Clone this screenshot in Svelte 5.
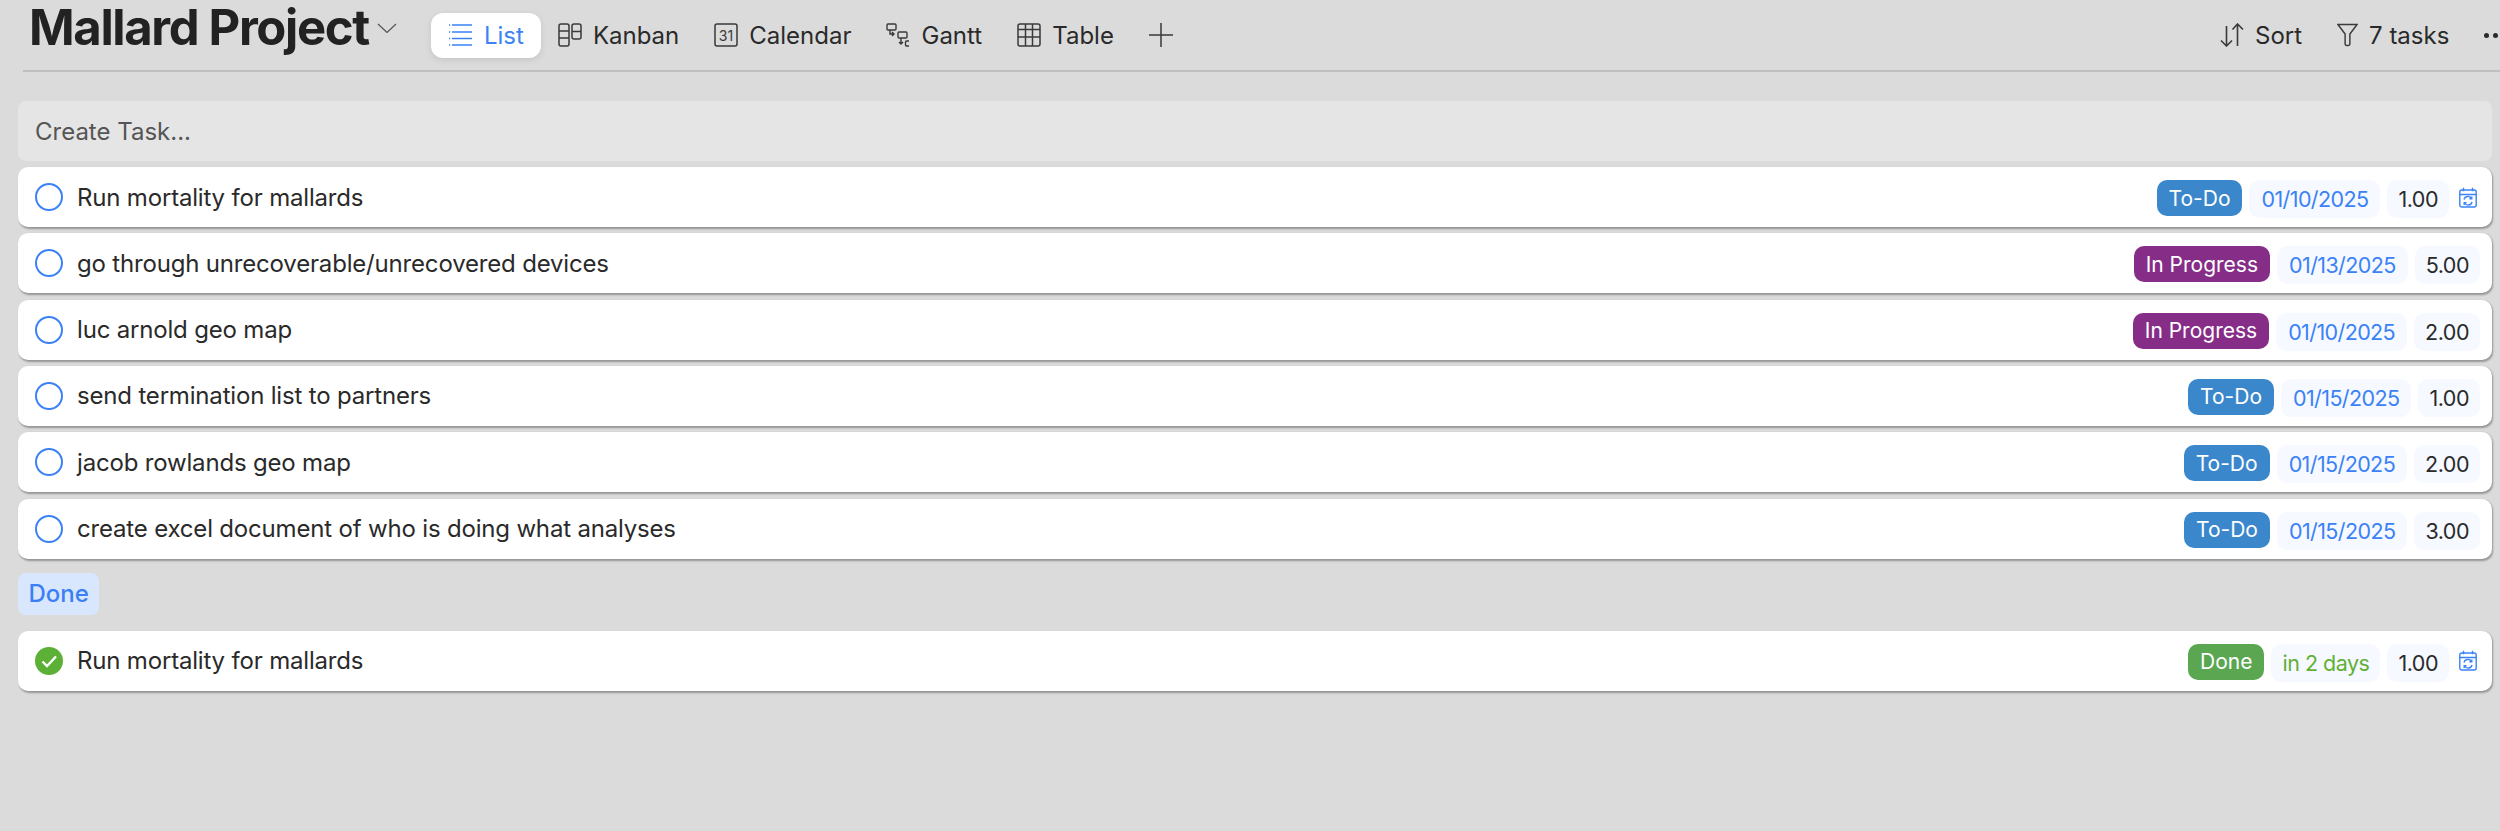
<script>
	const tasks = [
		{ title: 'Run mortality for mallards', status: 'To-Do', date: '01/10/2025', est: '1.00', recurring: true },
		{ title: 'go through unrecoverable/unrecovered devices', status: 'In Progress', date: '01/13/2025', est: '5.00' },
		{ title: 'luc arnold geo map', status: 'In Progress', date: '01/10/2025', est: '2.00' },
		{ title: 'send termination list to partners', status: 'To-Do', date: '01/15/2025', est: '1.00' },
		{ title: 'jacob rowlands geo map', status: 'To-Do', date: '01/15/2025', est: '2.00' },
		{ title: 'create excel document of who is doing what analyses', status: 'To-Do', date: '01/15/2025', est: '3.00' }
	];

	const done = [
		{ title: 'Run mortality for mallards', status: 'Done', date: 'in 2 days', est: '1.00', recurring: true, done: true }
	];

	const statusClass = { 'To-Do': 'todo', 'In Progress': 'progress', Done: 'complete' };
</script>

{#snippet row(task)}
	<div class="task">
		{#if task.done}
			<svg class="check" viewBox="0 0 28 28">
				<circle cx="14" cy="14" r="14" fill="#5cb035" />
				<path d="M7.5 14.5l4.5 4.5 9-9.5" fill="none" stroke="#fff" stroke-width="2.4" />
			</svg>
		{:else}
			<span class="circle"></span>
		{/if}
		<span class="title">{task.title}</span>
		<span class="badge {statusClass[task.status]}">{task.status}</span>
		<span class="pill date" class:green={task.done}>{task.date}</span>
		<span class="pill est">{task.est}</span>
		{#if task.recurring}
			<svg class="recur" viewBox="0 0 18 21" fill="none" stroke="#3b82f6" stroke-width="1.4">
				<rect x="0.8" y="3" width="16.4" height="17" rx="2" />
				<path d="M1 7.5h16M4.5 0.8v3.5M13.5 0.8v3.5" />
				<path d="M5 12.5a4 4 0 0 1 7.4-1M13 15a4 4 0 0 1-7.4 1" />
				<path d="M12.8 9.4v2.4h-2.4M5.2 18v-2.4h2.4" />
			</svg>
		{/if}
	</div>
{/snippet}

<div class="page">
	<header>
		<h1>Mallard Project</h1>
		<svg class="chevron" viewBox="0 0 20 10" fill="none" stroke="#555" stroke-width="1.2">
			<path d="M1 1l9 8.5L19 1" />
		</svg>

		<nav>
			<button class="tab active">
				<svg viewBox="0 0 24 24" fill="none" stroke="#3b82f6" stroke-width="1.5">
					<path d="M3 2h20M3 9h20M3 15.5h20M3 22h20" />
					<path d="M0 2h1.2M0 9h1.2M0 15.5h1.2M0 22h1.2" />
				</svg>
				List
			</button>
			<button class="tab">
				<svg viewBox="0 0 24 24" fill="none" stroke="#3a3a3a" stroke-width="1.5">
					<rect x="1" y="1" width="10" height="22" rx="2" />
					<path d="M1 8h10M1 15h10" />
					<rect x="14" y="1" width="9" height="15" rx="2" />
					<path d="M14 8.5h9" />
				</svg>
				Kanban
			</button>
			<button class="tab">
				<svg viewBox="0 0 24 24" fill="none" stroke="#3a3a3a" stroke-width="1.5">
					<rect x="1" y="1" width="22" height="22" rx="2" />
					<text x="12" y="17.5" text-anchor="middle" font-size="14" font-family="Inter" fill="#3a3a3a" stroke="none">31</text>
				</svg>
				Calendar
			</button>
			<button class="tab">
				<svg viewBox="0 0 24 24" fill="none" stroke="#3a3a3a" stroke-width="1.4">
					<rect x="1" y="1" width="9" height="6" rx="1" />
					<path d="M4 7v4h4M6 9l2 2-2 2" />
					<rect x="12" y="9" width="9" height="6" rx="1" />
					<path d="M15 15v6M13 19l2 2 2-2" />
					<path d="M23 18h-2.5a1 1 0 0 0-1 1v3a1 1 0 0 0 1 1H23" />
				</svg>
				Gantt
			</button>
			<button class="tab">
				<svg viewBox="0 0 24 24" fill="none" stroke="#3a3a3a" stroke-width="1.5">
					<rect x="1" y="1" width="22" height="22" rx="2" />
					<path d="M1 6.5h22M1 14h22M8.5 1v22M15.5 1v22" />
				</svg>
				Table
			</button>
			<button class="tab" aria-label="Add view">
				<svg viewBox="0 0 24 24" fill="none" stroke="#3a3a3a" stroke-width="1.5">
					<path d="M0 12h24M12 0v24" />
				</svg>
			</button>
		</nav>

		<div class="tools">
			<button class="tool">
				<svg viewBox="0 0 24 24" fill="none" stroke="#3a3a3a" stroke-width="1.6">
					<path d="M6.5 3v20M1 17.5l5.5 5.5 5.5-5.5" />
					<path d="M17.5 23V1M12.5 6.5L17.5 1l5.5 5.5" />
				</svg>
				Sort
			</button>
			<button class="tool">
				<svg class="funnel" viewBox="0 0 22 24" fill="none" stroke="#3a3a3a" stroke-width="1.5">
					<path d="M1 1h20l-7.5 10v10.5a1.5 1.5 0 0 1-1.5 1.5h-2a1.5 1.5 0 0 1-1.5-1.5V11z" />
				</svg>
				7 tasks
			</button>
			<span class="dots"><i></i><i></i><i></i></span>
		</div>
	</header>

	<main>
		<div class="create">Create Task...</div>
		<div class="list">
			{#each tasks as task}
				{@render row(task)}
			{/each}
		</div>
		<div class="group">Done</div>
		<div class="list">
			{#each done as task}
				{@render row(task)}
			{/each}
		</div>
	</main>
</div>

<style>
	:global(body) {
		background: #dbdbdb;
		font-family: Inter, 'Noto Sans', sans-serif;
		color: #2a2a2a;
	}

	.page {
		width: 2500px;
		height: 831px;
		overflow: hidden;
		background: #dbdbdb;
	}

	header {
		display: flex;
		align-items: center;
		height: 70px;
		margin-left: 23px;
		padding-left: 6px;
		border-bottom: 2px solid #bfbfbf;
		white-space: nowrap;
	}

	h1 {
		margin: 0 0 14px;
		font-size: 49px;
		font-weight: 700;
		letter-spacing: -1.35px;
		line-height: 56px;
		color: #222;
	}

	.chevron {
		width: 20px;
		height: 10px;
		margin: 0 0 14px 8px;
	}

	nav {
		display: flex;
		align-items: center;
		margin-left: 34.5px;
		gap: 35px;
	}

	button {
		display: flex;
		align-items: center;
		border: 0;
		background: none;
		padding: 0;
		font: inherit;
		font-size: 24px;
		color: #2a2a2a;
	}

	button svg {
		width: 24px;
		height: 24px;
		flex: none;
	}

	.tab {
		gap: 11px;
		height: 45px;
	}

	.tab.active {
		width: 110px;
		justify-content: center;
		background: #fff;
		color: #3b82f6;
		border-radius: 12px;
		box-shadow: 0 2px 6px rgba(0, 0, 0, 0.1);
		margin-right: -18.5px;
	}

	.tools {
		display: flex;
		align-items: center;
		gap: 35px;
		margin-left: auto;
		margin-right: -1px;
		width: 281px;
		flex: none;
		overflow: hidden;
	}

	.tool {
		gap: 11px;
		flex: none;
	}

	.tool .funnel {
		width: 21px;
	}

	.dots {
		display: flex;
		gap: 4px;
		flex: none;
	}

	.dots i {
		width: 5px;
		height: 5px;
		border-radius: 50%;
		background: #2a2a2a;
	}

	main {
		padding: 29px 8px 0 18px;
	}

	.create {
		height: 60px;
		display: flex;
		align-items: center;
		padding-left: 17px;
		background: #e5e5e5;
		border-radius: 8px;
		font-size: 24px;
		color: #555;
		margin-bottom: 6px;
	}

	.list {
		display: flex;
		flex-direction: column;
		gap: 6.33px;
	}

	.task {
		height: 60px;
		display: flex;
		align-items: center;
		gap: 7px;
		padding: 0 12px 0 17px;
		background: #fff;
		border-radius: 10px;
		box-shadow: 1px 1.5px 2px rgba(0, 0, 0, 0.32);
		box-sizing: border-box;
	}

	.circle,
	.check {
		width: 28px;
		height: 28px;
		flex: none;
		box-sizing: border-box;
		margin-right: 7px;
	}

	.circle {
		border: 2px solid #3b82f6;
		border-radius: 50%;
	}

	.title {
		flex: 1;
		font-size: 24px;
		letter-spacing: -0.18px;
	}

	.badge {
		height: 36px;
		display: flex;
		align-items: center;
		padding: 0 12px;
		border-radius: 10px;
		color: #fff;
		font-size: 21px;
		margin-top: 2px;
	}

	.todo {
		background: #3b87cc;
	}

	.progress {
		background: #862e87;
	}

	.complete {
		background: #5ba650;
	}

	.pill {
		height: 38px;
		display: flex;
		align-items: center;
		padding: 0 11px;
		border-radius: 10px;
		background: #f6f9ff;
		font-size: 21.5px;
		margin-top: 4px;
	}

	.date {
		color: #3b82f6;
		letter-spacing: -0.6px;
		padding: 0 12px;
	}

	.date.green {
		color: #5fb136;
		letter-spacing: -0.5px;
		padding: 0 11px;
	}

	.est {
		letter-spacing: -0.5px;
	}

	.recur {
		width: 18px;
		height: 21px;
		margin: 0 3px 0 3px;
	}

	.group {
		display: inline-block;
		margin: 14px 0 16px;
		height: 42px;
		line-height: 42px;
		padding: 0 10.5px;
		border-radius: 8px;
		background: #d8e7fd;
		color: #3b7ff6;
		font-size: 24px;
		font-weight: 500;
		vertical-align: top;
	}
</style>
